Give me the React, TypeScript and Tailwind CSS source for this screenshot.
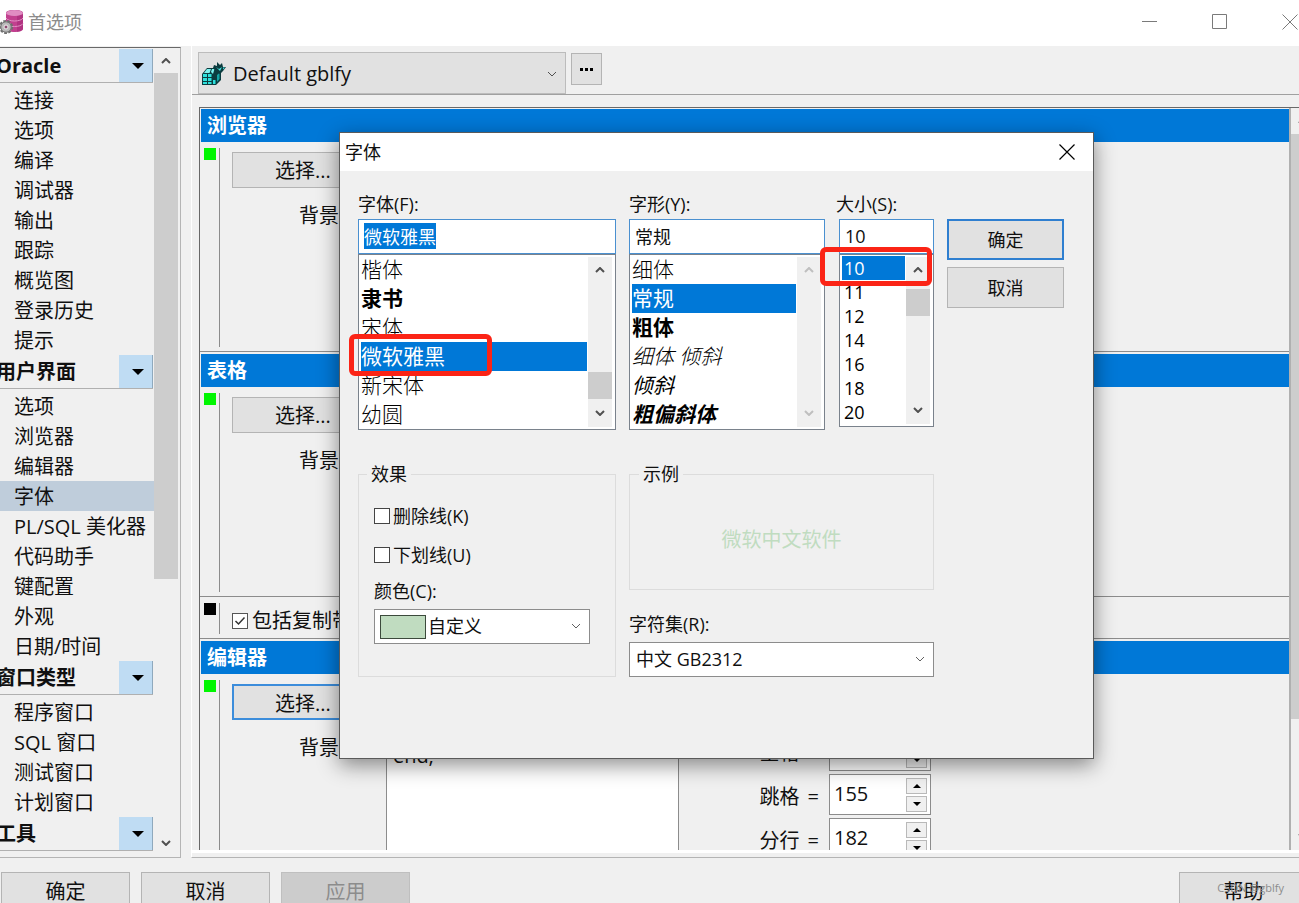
import { useEffect, useRef, type ReactNode } from 'react';
import clsx from 'clsx';

const navGroups = [
  {
    title: 'Oracle',
    items: ['连接', '选项', '编译', '调试器', '输出', '跟踪', '概览图', '登录历史', '提示'],
  },
  {
    title: '用户界面',
    items: ['选项', '浏览器', '编辑器', '字体', 'PL/SQL 美化器', '代码助手', '键配置', '外观', '日期/时间'],
    active: '字体',
  },
  { title: '窗口类型', items: ['程序窗口', 'SQL 窗口', '测试窗口', '计划窗口'] },
  { title: '工具', items: [] },
];

const fontItems = [
  { name: '楷体', className: 'font-light' },
  { name: '隶书', className: 'font-bold' },
  { name: '宋体', className: 'font-light' },
  { name: '微软雅黑', className: '' },
  { name: '新宋体', className: 'font-light' },
  { name: '幼圆', className: 'font-light' },
];

const styleItems = [
  { name: '细体', className: 'font-light' },
  { name: '常规', className: '' },
  { name: '粗体', className: 'font-bold' },
  { name: '细体 倾斜', className: 'font-light italic' },
  { name: '倾斜', className: 'italic' },
  { name: '粗偏斜体', className: 'font-bold italic' },
];

const sizeItems = ['10', '11', '12', '14', '16', '18', '20'].map((name) => ({ name, className: '' }));

function Chevron({ up, className }: { up?: boolean; className?: string }) {
  return (
    <svg viewBox="0 0 10 6" className={clsx('h-[6px] w-[10px]', className)} fill="none" stroke="currentColor" aria-hidden>
      <path d={up ? 'M1 5 L5 1 L9 5' : 'M1 1 L5 5 L9 1'} />
    </svg>
  );
}

function Triangle({ up, className }: { up?: boolean; className?: string }) {
  return (
    <svg viewBox="0 0 12 6" className={className} fill="black" aria-hidden>
      <path d={up ? 'M0 6 L6 0 L12 6 Z' : 'M0 0 L12 0 L6 6 Z'} />
    </svg>
  );
}

type ScrollBarProps = { before: string; thumb?: string; disabled?: boolean };

function ScrollBar({ before, thumb, disabled }: ScrollBarProps) {
  const arrow = clsx('stroke-2', disabled ? 'text-[#bfbfbf]' : 'text-[#505050]');
  return (
    <div className="flex w-6 shrink-0 flex-col bg-[#f0f0f0]">
      <button type="button" aria-label="向上" className="flex h-[25px] shrink-0 items-center justify-center">
        <Chevron up className={arrow} />
      </button>
      <div className={before} />
      {thumb && <div className={clsx('shrink-0 bg-[#cdcdcd]', thumb)} />}
      <button type="button" aria-label="向下" className="mt-auto flex h-7 shrink-0 items-center justify-center">
        <Chevron className={arrow} />
      </button>
    </div>
  );
}

function DatabaseIcon() {
  return (
    <svg viewBox="0 0 24 26" className="h-[26px] w-6" aria-hidden>
      <path d="M6 4 C6 0 23 0 23 4 V20 C23 24 6 24 6 20 Z" fill="#c2408f" />
      <path d="M6 4 C6 0 23 0 23 4 V20 C22 22 19 23 17 23 V6 Z" fill="#a52c78" opacity="0.6" />
      <ellipse cx="14.500" cy="4" rx="8.500" ry="3" fill="#e08cc2" />
      <path d="M6 9 C8 13 21 13 23 9 M6 14.500 C8 18.500 21 18.500 23 14.500" fill="none" stroke="#e293c6" strokeWidth="1" />
      <circle cx="6" cy="18" r="5.800" fill="#a5a5a5" stroke="#6e6e6e" strokeWidth="2.600" strokeDasharray="2.600 1.400" />
      <circle cx="6" cy="18" r="5.200" fill="#b9b9b9" stroke="#777" />
      <circle cx="6" cy="18" r="2" fill="#8b4a70" stroke="#eee" />
    </svg>
  );
}

function RegistryIcon() {
  return (
    <svg viewBox="0 0 24 24" className="h-6 w-6" aria-hidden>
      <path d="M0 12 L5 6 H13 L19 10 V18 L14 23 H0 Z" fill="#0b3c3f" />
      <path
        d="M1 12 H5 V15 H1 Z M6 12 H9.500 V15 H6 Z M1 16 H5 V19 H1 Z M6 16 H9.500 V19 H6 Z M1 20 H5 V22 H1 Z M6 20 H9.500 V22 H6 Z M11 18 H13.500 V22 H11 Z"
        fill="#2fe0dc"
      />
      <path d="M5 7 H9 L7.500 11 H2 Z M10 7 H12.500 L11 12 L9 10 Z" fill="#7df3ef" />
      <path d="M15 13 L17.500 11 V17 L15 20 Z" fill="#14a3a3" />
      <path d="M12 3 L15 4 L15 0 L18 3 L20 1 L21 5 L24 5 L21 9 L18 12 L14 9 L11 6 Z" fill="#0b3c3f" />
      <path d="M14 5 L17 7 L20 5 L18 9 Z M21 5.500 H23 L21 7.500 Z" fill="#4be8e4" />
    </svg>
  );
}

function Sidebar() {
  return (
    <nav className="mt-px flex w-[181px] shrink-0 border-t border-r border-b border-t-[#696969] border-r-[#b4b4b4] border-b-[#b4b4b4]">
      <div className="flex w-[154px] shrink-0 flex-col overflow-hidden pt-px">
        {navGroups.map((group) => (
          <section key={group.title} className="shrink-0">
            <div className="flex h-9 pb-[2px]">
              <div className="flex w-[153px] items-center justify-between border-b border-[#b0b0b0]">
                <h2 className="-ml-1 text-xl leading-8 font-bold whitespace-nowrap">{group.title}</h2>
                <button
                  type="button"
                  aria-label={group.title}
                  className="flex h-full w-[34px] items-center justify-center border-r border-[#8fa9bd] bg-[#bfdcf3] pl-1"
                >
                  <Triangle className="h-[6px] w-3" />
                </button>
              </div>
            </div>
            <ul>
              {group.items.map((item) => (
                <li key={item}>
                  <a
                    href="#"
                    className={clsx(
                      'block h-[30px] pt-[2px] pl-[14px] text-xl leading-7 whitespace-nowrap',
                      group.active === item && 'bg-[#bfcddb]',
                    )}
                  >
                    {item}
                  </a>
                </li>
              ))}
            </ul>
          </section>
        ))}
      </div>
      <ScrollBar before="h-0" thumb="h-[506px]" />
    </nav>
  );
}

function Gutter({ color }: { color: string }) {
  return (
    <div className="mt-[6px] mb-1 w-[20px] shrink-0 border-r border-[#8c8c8c] pl-1">
      <div className={clsx('h-3 w-3', color)} />
    </div>
  );
}

type SectionProps = { title: string; focused?: boolean; children?: ReactNode; footer?: ReactNode };

function Section({ title, focused, children, footer }: SectionProps) {
  return (
    <section className="shrink-0">
      <h2 className="ml-px h-[33px] bg-[#0078d7] pt-px pl-[6px] text-xl leading-8 font-bold text-white">{title}</h2>
      <div className="flex h-[210px] border-b border-[#8c8c8c]">
        <Gutter color="bg-[#00f600]" />
        <div className="ml-3 w-[154px] shrink-0 pt-[10px]">
          <button
            type="button"
            className={clsx(
              'h-9 w-[142px] bg-[#e1e1e1] pt-[2px] text-xl leading-8',
              focused ? 'border-2 border-[#3c8ddb]' : 'border border-[#b4b4b4]',
            )}
          >
            选择...
          </button>
          <p className="mt-[14px] pl-[67px] text-xl leading-7 whitespace-nowrap">背景</p>
        </div>
        {children}
      </div>
      {footer}
    </section>
  );
}

function SpinBox({ label, value }: { label: string; value: string }) {
  return (
    <div className="mb-[3px] flex items-center">
      <label htmlFor={label} className="flex w-[140px] justify-end gap-2 pt-1 text-xl leading-8">
        {label} <span>=</span>
      </label>
      <div className="ml-[10px] flex h-[41px] w-[102px] items-center border border-[#8c8c8c] bg-white pr-[3px]">
        <input id={label} defaultValue={value} className="w-0 flex-1 pb-[2px] pl-1 text-xl leading-8 outline-none" />
        <div className="flex w-[21px] flex-col gap-[2px]">
          <button type="button" aria-label="增加" className="flex h-4 items-center justify-center border border-[#b9b9b9] bg-[#f0f0f0]">
            <Triangle up className="h-1 w-2" />
          </button>
          <button type="button" aria-label="减少" className="flex h-4 items-center justify-center border border-[#b9b9b9] bg-[#f0f0f0]">
            <Triangle className="h-1 w-2" />
          </button>
        </div>
      </div>
    </div>
  );
}

function MainPanel() {
  return (
    <main className="ml-[10px] flex min-w-0 flex-1 flex-col border-b border-l border-b-[#b4b4b4] border-l-white pb-1">
      <div className="flex h-[49px] shrink-0 items-start border-b border-[#a0a0a0] pt-[6px] pl-[6px]">
        <div className="relative">
          <span className="absolute top-[10px] left-1">
            <RegistryIcon />
          </span>
          <select
            aria-label="首选项集"
            className="h-[42px] w-[368px] appearance-none border border-[#bcbcbc] bg-[#e1e1e1] pt-[2px] pl-[34px] text-xl leading-8"
          >
            <option>Default gblfy</option>
          </select>
          <Chevron className="absolute top-[19px] right-[9px] text-[#505050]" />
        </div>
        <button
          type="button"
          aria-label="更多"
          className="mt-px ml-[5px] flex h-8 w-[31px] items-center justify-center gap-[2px] border border-[#b4b4b4] bg-[#e1e1e1]"
        >
          <span className="h-[3px] w-[3px] bg-black" />
          <span className="h-[3px] w-[3px] bg-black" />
          <span className="h-[3px] w-[3px] bg-black" />
        </button>
      </div>

      <div className="mt-3 ml-[7px] flex min-h-0 flex-1 border-t border-l border-[#696969]">
        <div className="flex min-w-0 flex-1 flex-col gap-[2px] overflow-hidden border-r-2 border-[#b0b0b0] pt-px">
          <Section title="浏览器" />
          <Section
            title="表格"
            footer={
              <div className="flex h-[42px] border-b border-[#8c8c8c]">
                <Gutter color="bg-black" />
                <label className="ml-3 flex items-center gap-1 pt-[6px] text-xl leading-8">
                  <span className="relative flex">
                    <input
                      type="checkbox"
                      defaultChecked
                      className="h-4 w-4 appearance-none border border-[#555] bg-white"
                    />
                    <svg viewBox="0 0 16 16" className="absolute inset-0 h-4 w-4" fill="none" stroke="#333" strokeWidth="1.500" aria-hidden>
                      <path d="M3.500 8 L6.500 11 L12.500 4.500" />
                    </svg>
                  </span>
                  包括复制带格式
                </label>
              </div>
            }
          />
          <Section title="编辑器" focused>
            <textarea
              aria-label="预览"
              defaultValue={'begin\n  null;\nend;'}
              className="w-[293px] shrink-0 resize-none border-x border-[#8c8c8c] bg-white pt-3 pl-[6px] text-xl leading-7 outline-none"
            />
            <div className="pt-3">
              <SpinBox label="行距" value="100" />
              <SpinBox label="空格" value="120" />
              <SpinBox label="跳格" value="155" />
              <SpinBox label="分行" value="182" />
            </div>
          </Section>
        </div>
        <div className="-mr-4 flex">
          <ScrollBar before="h-px" thumb="h-[585px]" />
        </div>
      </div>
      <div className="h-[3px] shrink-0 bg-white" />
    </main>
  );
}

type ListProps = {
  label: string;
  items: { name: string; className: string }[];
  selected: string;
  className: string;
  itemClass: string;
  scroll: ReactNode;
};

function ListBox({ label, items, selected, className, itemClass, scroll }: ListProps) {
  return (
    <div className={clsx('flex border border-[#7a828c] bg-white', className)}>
      <ul role="listbox" aria-label={label} className="min-w-0 flex-1 pl-[2px]">
        {items.map((item) => (
          <li
            key={item.name}
            role="option"
            aria-selected={item.name === selected}
            className={clsx(
              'whitespace-nowrap',
              itemClass,
              item.className,
              item.name === selected ? 'bg-[#0078d7] text-white' : 'text-black',
            )}
          >
            {item.name}
          </li>
        ))}
      </ul>
      <div className="mr-[3px] flex py-[2px] pl-px">{scroll}</div>
    </div>
  );
}

const fieldClass = 'h-[35px] w-full border border-[#4a90d0] bg-white px-[5px] pb-[2px] text-lg leading-6 outline-none';

function FontDialog() {
  const nameRef = useRef<HTMLInputElement>(null);

  useEffect(() => {
    nameRef.current?.focus();
    nameRef.current?.select();
  }, []);

  return (
    <div
      role="dialog"
      aria-labelledby="font-dialog-title"
      className="absolute top-[132px] left-[339px] w-[755px] border border-[#5a5a5a] bg-[#f0f0f0] shadow-[0_6px_20px_rgba(0,0,0,0.45)]"
    >
      <div className="flex h-[38px] items-center justify-between bg-white pr-[18px] pb-px pl-[5px]">
        <h1 id="font-dialog-title" className="text-lg leading-6">
          字体
        </h1>
        <button type="button" aria-label="关闭">
          <svg viewBox="0 0 16 16" className="h-4 w-4" stroke="black" strokeWidth="1.200" aria-hidden>
            <path d="M0.500 0.500 L15.500 15.500 M15.500 0.500 L0.500 15.500" />
          </svg>
        </button>
      </div>

      <div className="flex gap-[13px] pt-[21px] pb-[81px] pl-[18px] text-lg leading-6">
        <div className="w-[258px]">
          <label htmlFor="font-name" className="mb-[3px] block">
            字体(F):
          </label>
          <input
            id="font-name"
            ref={nameRef}
            defaultValue="微软雅黑"
            className={clsx(fieldClass, 'selection:bg-[#0078d7] selection:text-white')}
          />
          <div className="relative">
            <ListBox
              label="字体"
              items={fontItems}
              selected="微软雅黑"
              className="h-[176px]"
              itemClass="h-[29px] text-[21px] leading-[29px]"
              scroll={<ScrollBar before="h-[94px]" thumb="h-[27px]" />}
            />
            <div className="pointer-events-none absolute top-[80px] -left-[9px] h-[42px] w-[143px] rounded-md border-[5px] border-[#fb2416]" />
          </div>

          <fieldset className="mt-8 border border-[#dcdcdc]">
            <legend className="ml-2 px-1">效果</legend>
            <div className="flex flex-col items-start px-[15px] pt-[18px] pb-8">
              <label className="flex items-center gap-[3px]">
                <input type="checkbox" className="h-4 w-4 appearance-none border border-[#444] bg-white" />
                删除线(K)
              </label>
              <label className="mt-[15px] flex items-center gap-[3px]">
                <input type="checkbox" className="h-4 w-4 appearance-none border border-[#444] bg-white" />
                下划线(U)
              </label>
              <label htmlFor="font-color" className="mt-3">
                颜色(C):
              </label>
              <div className="relative mt-[6px] w-[216px]">
                <select id="font-color" className="h-[35px] w-full appearance-none border border-[#8c8c8c] bg-white pb-[2px] pl-[53px]">
                  <option>自定义</option>
                </select>
                <span className="absolute top-[6px] left-[6px] h-6 w-[46px] border border-[#3c4a3c] bg-[#c0dcc0]" />
                <Chevron className="absolute top-[14px] right-[9px] text-[#606060]" />
              </div>
            </div>
          </fieldset>
        </div>

        <div className="w-[305px]">
          <div className="flex justify-between">
            <div className="w-[196px]">
              <label htmlFor="font-style" className="mb-[3px] block">
                字形(Y):
              </label>
              <input id="font-style" defaultValue="常规" className={fieldClass} />
              <ListBox
                label="字形"
                items={styleItems}
                selected="常规"
                className="h-[176px]"
                itemClass="h-[29px] text-[21px] leading-[29px]"
                scroll={<ScrollBar before="h-px" disabled />}
              />
            </div>
            <div className="relative w-[95px]">
              <label htmlFor="font-size" className="mb-[3px] -ml-[3px] block">
                大小(S):
              </label>
              <input id="font-size" defaultValue="10" className={fieldClass} />
              <ListBox
                label="大小"
                items={sizeItems}
                selected="10"
                className="h-[173px]"
                itemClass="h-6 pl-[2px] text-lg leading-6 first:mt-px"
                scroll={<ScrollBar before="h-[7px]" thumb="h-[27px]" />}
              />
              <div className="pointer-events-none absolute top-[55px] -left-[19px] h-[39px] w-[112px] rounded-md border-[5px] border-[#fb2416]" />
            </div>
          </div>

          <fieldset className="mt-8 border border-[#dcdcdc]">
            <legend className="ml-[9px] px-1">示例</legend>
            <p className="flex h-[103px] items-center justify-center pt-1 text-xl text-[#c0dcc0]">微软中文软件</p>
          </fieldset>

          <label htmlFor="charset" className="mt-[22px] block">
            字符集(R):
          </label>
          <div className="relative mt-[6px]">
            <select id="charset" className="h-[35px] w-full appearance-none border border-[#8c8c8c] bg-white pb-[2px] pl-[6px]">
              <option>中文 GB2312</option>
            </select>
            <Chevron className="absolute top-[14px] right-[9px] text-[#606060]" />
          </div>
        </div>

        <div className="mt-[27px] flex w-[117px] flex-col gap-[7px]">
          <button type="button" className="h-[41px] border-2 border-[#2f7fd0] bg-[#e1e1e1]">
            确定
          </button>
          <button type="button" className="h-[41px] border border-[#b4b4b4] bg-[#e1e1e1]">
            取消
          </button>
        </div>
      </div>
    </div>
  );
}

export default function App() {
  const footerButton = 'h-10 w-[129px] shrink-0 border text-xl leading-8';
  return (
    <div className="relative flex h-screen flex-col overflow-hidden bg-[#f0f0f0] font-['Open_Sans','Noto_Sans_CJK_SC',sans-serif] text-[#101010]">
      <header className="flex h-[46px] shrink-0 items-center bg-white pb-[3px] text-[#8c8c8c]">
        <DatabaseIcon />
        <span className="ml-1 text-lg leading-6">首选项</span>
        <div className="mr-px ml-auto flex items-center gap-[54px]">
          <button type="button" aria-label="最小化">
            <svg viewBox="0 0 16 16" className="h-4 w-4" stroke="#7a7a7a" aria-hidden>
              <path d="M0 7.500 H15" />
            </svg>
          </button>
          <button type="button" aria-label="最大化">
            <svg viewBox="0 0 16 16" className="h-4 w-4" fill="none" stroke="#7a7a7a" aria-hidden>
              <path d="M0.500 0.500 H14.500 V14.500 H0.500 Z" />
            </svg>
          </button>
          <button type="button" aria-label="关闭">
            <svg viewBox="0 0 16 16" className="h-4 w-4" stroke="#7a7a7a" aria-hidden>
              <path d="M0.500 0.500 L15.500 15.500 M15.500 0.500 L0.500 15.500" />
            </svg>
          </button>
        </div>
      </header>

      <div className="flex min-h-0 flex-1">
        <Sidebar />
        <MainPanel />
      </div>

      <footer className="flex h-[45px] shrink-0 gap-[11px] pt-[14px] pl-px">
        <button type="button" className={clsx(footerButton, 'border-[#b4b4b4] bg-[#e1e1e1]')}>
          确定
        </button>
        <button type="button" className={clsx(footerButton, 'border-[#b4b4b4] bg-[#e1e1e1]')}>
          取消
        </button>
        <button type="button" disabled className={clsx(footerButton, 'border-[#bfbfbf] bg-[#cccccc] text-[#8c8c8c]')}>
          应用
        </button>
        <div className="relative -mr-[9px] ml-auto">
          <button type="button" className={clsx(footerButton, 'border-[#b4b4b4] bg-[#e1e1e1]')}>
            帮助
          </button>
          <span className="pointer-events-none absolute top-2 right-6 text-[11px] leading-4 whitespace-nowrap text-[#8c8c8c]">
            CSDN @gblfy
          </span>
        </div>
      </footer>

      <FontDialog />
    </div>
  );
}
